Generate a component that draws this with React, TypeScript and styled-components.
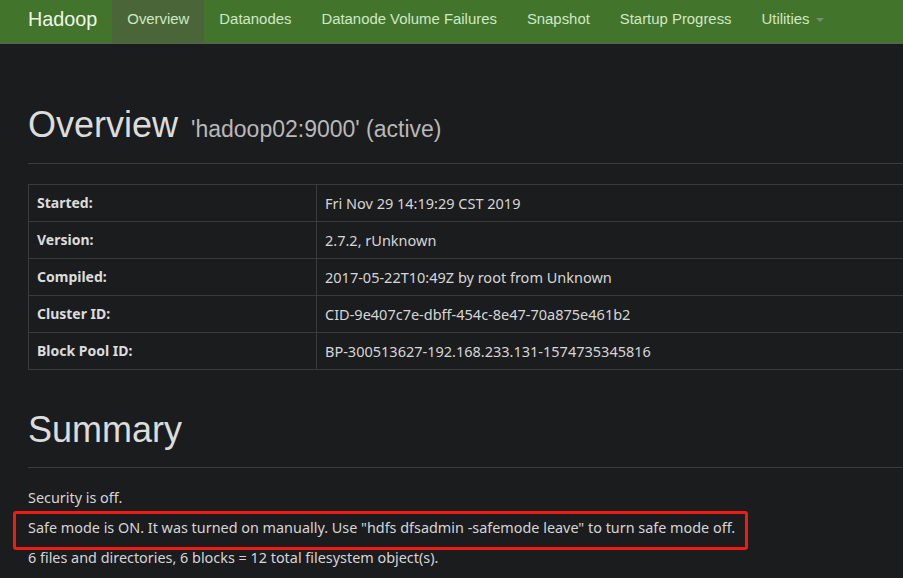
import React from "react";
import styled, { createGlobalStyle } from "styled-components";

const Global = createGlobalStyle`
  html, body { margin: 0; padding: 0; background: #1b1c1e; overflow: hidden; }
  body { font-family: "Noto Sans", "Open Sans", sans-serif; font-size: 14px; line-height: 20px; color: #d6d6d6; }
`;

const Navbar = styled.nav`
  display: flex;
  align-items: stretch;
  height: 43px;
  background: #43742c;
  border-bottom: 1px solid #5a5f58;
  padding-left: 13px;
  width: 1200px;
  font-family: "Liberation Sans", Arial, sans-serif;
`;

const Brand = styled.div`
  display: flex;
  align-items: center;
  padding: 0 15px 6px;
  font-size: 19.8px;
  color: #eef7e8;
`;

const NavItem = styled.div<{ $active?: boolean }>`
  display: flex;
  align-items: center;
  gap: 6px;
  padding: 0 15px 6px;
  font-size: 14.9px;
  color: #cfe8c4;
  background: ${(p) => (p.$active ? "#4a6638" : "transparent")};
`;

const Caret = styled.span`
  display: inline-block;
  width: 0;
  height: 0;
  border-top: 4px solid #7d8a74;
  border-left: 4px solid transparent;
  border-right: 4px solid transparent;
  margin-top: 2px;
`;

const Main = styled.main`
  width: 1200px;
  padding: 0 28px;
  box-sizing: border-box;
  display: flex;
  flex-direction: column;
`;

const PageHeader = styled.div<{ $top: number }>`
  margin-top: ${(p) => p.$top}px;
  padding-bottom: 18px;
  border-bottom: 1px solid #3a3b3d;
`;

const H1 = styled.h1`
  margin: 0;
  font-family: "Liberation Sans", Arial, sans-serif;
  font-weight: 400;
  font-size: 36px;
  line-height: 39.6px;
  color: #dcdcdc;
`;

const Small = styled.small`
  font-size: 23px;
  line-height: 1;
  color: #b8b8b8;
  margin-left: 3px;
`;

const Table = styled.table`
  margin-top: 20px;
  border-collapse: collapse;
  width: 100%;
`;

const Th = styled.th`
  width: 271px;
  text-align: left;
  font-weight: 700;
  padding: 8px;
  border: 1px solid #3a3b3d;
  color: #dcdcdc;
`;

const Td = styled.td`
  padding: 8px;
  border: 1px solid #3a3b3d;
  color: #d6d6d6;
  font-size: 14.5px;
`;

const Text = styled.p`
  margin: 0 0 10px;
  font-size: 14.4px;
`;

const Lines = styled.div`
  margin-top: 20px;
`;

const Highlight = styled.span`
  position: relative;
  display: inline-block;
  &::after {
    content: "";
    position: absolute;
    left: -15px;
    right: -13px;
    top: -7px;
    bottom: -12px;
    border: 3px solid #f01c14;
    border-radius: 3px;
    pointer-events: none;
  }
`;

const rows: [string, string][] = [
  ["Started:", "Fri Nov 29 14:19:29 CST 2019"],
  ["Version:", "2.7.2, rUnknown"],
  ["Compiled:", "2017-05-22T10:49Z by root from Unknown"],
  ["Cluster ID:", "CID-9e407c7e-dbff-454c-8e47-70a875e461b2"],
  ["Block Pool ID:", "BP-300513627-192.168.233.131-1574735345816"],
];

const navs = ["Datanodes", "Datanode Volume Failures", "Snapshot", "Startup Progress"];

export default function App() {
  return (
    <>
      <Global />
      <Navbar>
        <Brand>Hadoop</Brand>
        <NavItem $active>Overview</NavItem>
        {navs.map((n) => (
          <NavItem key={n}>{n}</NavItem>
        ))}
        <NavItem>
          Utilities <Caret />
        </NavItem>
      </Navbar>
      <Main>
        <PageHeader $top={61}>
          <H1>
            Overview <Small>'hadoop02:9000' (active)</Small>
          </H1>
        </PageHeader>
        <Table>
          <tbody>
            {rows.map(([k, v]) => (
              <tr key={k}>
                <Th>{k}</Th>
                <Td>{v}</Td>
              </tr>
            ))}
          </tbody>
        </Table>
        <PageHeader $top={40}>
          <H1>Summary</H1>
        </PageHeader>
        <Lines>
          <Text>Security is off.</Text>
          <Text>
            <Highlight>
              Safe mode is ON. It was turned on manually. Use "hdfs dfsadmin -safemode leave" to turn safe mode off.
            </Highlight>
          </Text>
          <Text>6 files and directories, 6 blocks = 12 total filesystem object(s).</Text>
        </Lines>
      </Main>
    </>
  );
}
